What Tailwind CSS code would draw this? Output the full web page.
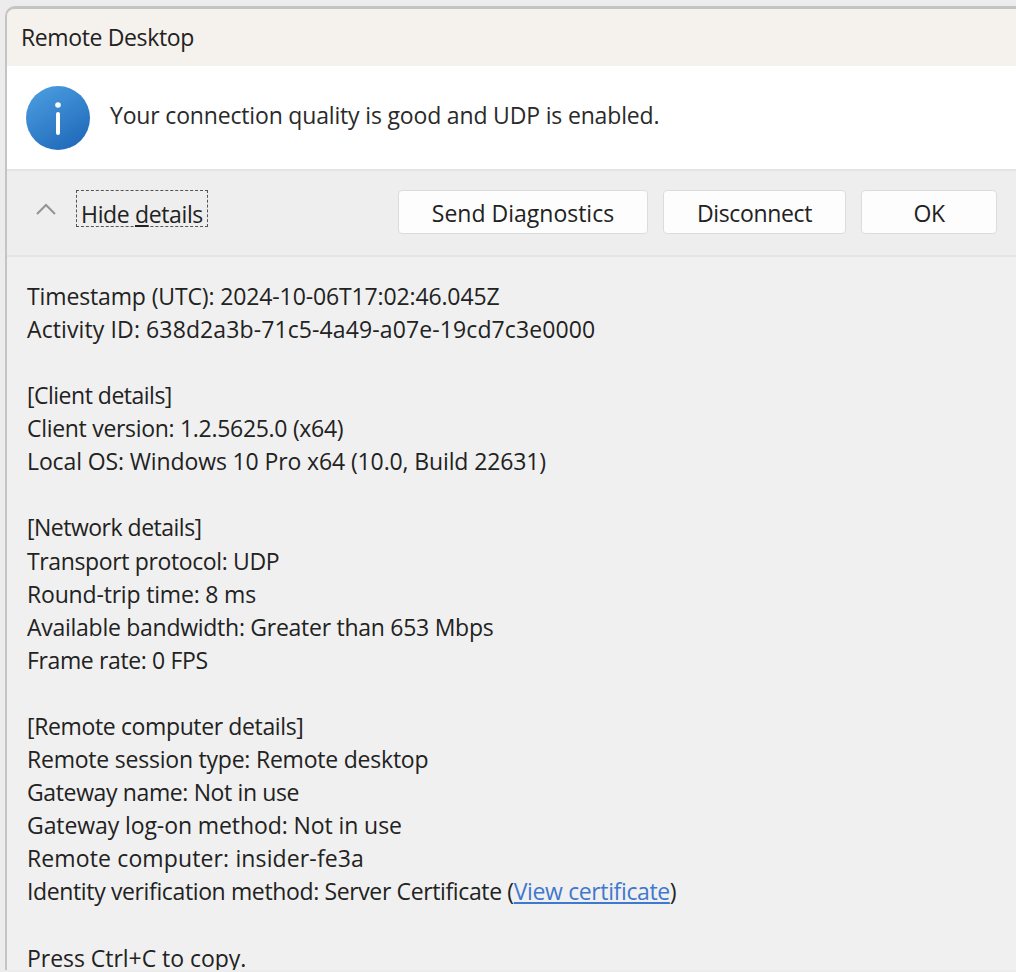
<!DOCTYPE html>
<html lang="en">
<head>
<meta charset="UTF-8">
<title>Remote Desktop</title>
<script src="https://cdn.jsdelivr.net/npm/@tailwindcss/browser@4"></script>
</head>
<body class="h-[972px] w-[1016px] overflow-hidden bg-[#ececec] pt-[6px] pl-[5px] font-['Open_Sans',sans-serif] text-[23px] tracking-[-0.37px] text-[#222]">

  <div class="flex h-[964px] flex-col overflow-hidden rounded-tl-[10px] border-t-[3px] border-l-[2px] border-[#c4c4c4] bg-[#f0f0f0]">

    <!-- Title bar -->
    <div class="flex h-[57px] shrink-0 items-center bg-[#f5f1ed] pl-[14px]">Remote Desktop</div>

    <!-- Message -->
    <div class="flex h-[103px] shrink-0 items-center bg-white pl-[19px] text-[#2a2a2a]">
      <svg class="shrink-0" width="64" height="64" viewBox="0 0 64 64">
        <defs>
          <linearGradient id="infoFill" x1="0.2" y1="0" x2="0.8" y2="1">
            <stop offset="0" stop-color="#4a9ce0"/>
            <stop offset="1" stop-color="#1f68b8"/>
          </linearGradient>
        </defs>
        <circle cx="32" cy="32" r="32" fill="url(#infoFill)"/>
        <circle cx="32" cy="19" r="2.8" fill="#fff"/>
        <rect x="30" y="26" width="4" height="23" rx="2" fill="#fff"/>
      </svg>
      <span class="mb-[4px] ml-[20px] tracking-[-0.17px]">Your connection quality is good and UDP is enabled.</span>
    </div>

    <!-- Action bar -->
    <div class="flex h-[88px] shrink-0 items-center border-y-[2px] border-[#e4e4e4] bg-[#eeeeee] pl-[28px]">
      <svg class="mb-[8px]" width="22" height="14" viewBox="0 0 22 14" fill="none" stroke="#949494" stroke-width="2"><path d="M2 12 L11 3 L20 12"/></svg>
      <span class="mb-[9px] ml-[19px] flex h-[37px] w-[132px] items-center justify-center whitespace-nowrap border border-dashed border-[#555] pt-[10px] leading-[24px]">Hide&nbsp;<span class="underline">d</span>etails</span>
      <div class="ml-auto flex gap-[15px] pr-[19px]">
        <button class="mb-[2px] h-[44px] w-[250px] rounded-[4px] border border-[#dcdcdc] bg-[#fdfdfd] pt-[3px] tracking-[0px]">Send Diagnostics</button>
        <button class="mb-[2px] h-[44px] w-[183px] rounded-[4px] border border-[#dcdcdc] bg-[#fdfdfd] pt-[3px]">Disconnect</button>
        <button class="mb-[2px] h-[44px] w-[136px] rounded-[4px] border border-[#dcdcdc] bg-[#fdfdfd] pt-[3px]">OK</button>
      </div>
    </div>

    <!-- Details -->
    <div class="flex flex-col pt-[23px] pl-[20px] leading-[33.1px]">
      <p class="tracking-[-0.13px]">Timestamp (UTC): 2024-10-06T17:02:46.045Z</p>
      <p class="tracking-[0.11px]">Activity ID: 638d2a3b-71c5-4a49-a07e-19cd7c3e0000</p>
      <p class="mt-[33px] tracking-[-0.5px]">[Client details]</p>
      <p class="tracking-[-0.3px]">Client version: 1.2.5625.0 (x64)</p>
      <p class="tracking-[-0.12px]">Local OS: Windows 10 Pro x64 (10.0, Build 22631)</p>
      <p class="mt-[33px] tracking-[-0.5px]">[Network details]</p>
      <p>Transport protocol: UDP</p>
      <p class="tracking-[-0.18px]">Round-trip time: 8 ms</p>
      <p class="tracking-[-0.27px]">Available bandwidth: Greater than 653 Mbps</p>
      <p>Frame rate: 0 FPS</p>
      <p class="mt-[33px]">[Remote computer details]</p>
      <p class="tracking-[-0.22px]">Remote session type: Remote desktop</p>
      <p>Gateway name: Not in use</p>
      <p class="tracking-[-0.09px]">Gateway log-on method: Not in use</p>
      <p class="tracking-[0.13px]">Remote computer: insider-fe3a</p>
      <p>Identity verification method: Server Certificate (<a class="text-[#3f78cf] underline" href="#">View certificate</a>)</p>
      <p class="mt-[37px] leading-[25px] tracking-[-0.04px]">Press Ctrl+C to copy.</p>
    </div>
  </div>
</body>
</html>
